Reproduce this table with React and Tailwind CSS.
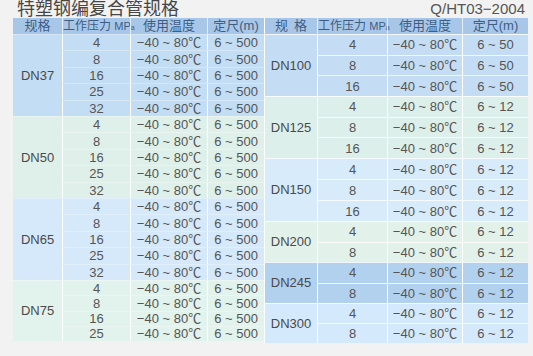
import React from 'react';

const leftCols = ['w-[49px]', 'w-[68px]', 'w-[77px]', 'w-[57px]'];
const rightCols = ['w-[52px]', 'w-[70px]', 'w-[75px]', 'w-[66px]'];

const leftGroups = [
  { name: 'DN37', h: 'h-[82px]', bg: 'bg-[#c3ddf4]', rows: ['4', '8', '16', '25', '32'], len: '6 ~ 500' },
  { name: 'DN50', h: 'h-[82px]', bg: 'bg-[#dff0ea]', rows: ['4', '8', '16', '25', '32'], len: '6 ~ 500' },
  { name: 'DN65', h: 'h-[82px]', bg: 'bg-[#d5e9fa]', rows: ['4', '8', '16', '25', '32'], len: '6 ~ 500' },
  { name: 'DN75', h: 'h-[61px]', bg: 'bg-[#e2f2ec]', rows: ['4', '8', '16', '25'], len: '6 ~ 500' },
];

const rightGroups = [
  { name: 'DN100', h: 'h-[62px]', bg: 'bg-[#c4ddf4]', rows: ['4', '8', '16'], len: '6 ~ 50' },
  { name: 'DN125', h: 'h-[62px]', bg: 'bg-[#ddefea]', rows: ['4', '8', '16'], len: '6 ~ 12' },
  { name: 'DN150', h: 'h-[63px]', bg: 'bg-[#d7ebfb]', rows: ['4', '8', '16'], len: '6 ~ 12' },
  { name: 'DN200', h: 'h-[41px]', bg: 'bg-[#e2f1ea]', rows: ['4', '8'], len: '6 ~ 12' },
  { name: 'DN245', h: 'h-[41px]', bg: 'bg-[#b2d1ef]', rows: ['4', '8'], len: '6 ~ 12' },
  { name: 'DN300', h: 'h-[40px]', bg: 'bg-[#d4e9fb]', rows: ['4', '8'], len: '6 ~ 12' },
];

function Table({ cols, groups, spaced, rowLine }) {
  return (
    <div className="flex flex-col">
      <div className="flex h-[16px] bg-[#a8c7e8] text-[#3e5d85] text-[13px] leading-[16px]">
        <div className={`${cols[0]} text-center ${spaced ? 'tracking-[6px] pl-[6px]' : ''}`}>规格</div>
        <div className={`${cols[1]} text-center border-l border-white/70 text-[12px] whitespace-nowrap`}>
          工作压力 <span className="text-[11px]">MP</span><span className="text-[7px]">a</span>
        </div>
        <div className={`${cols[2]} text-center border-l border-white/70`}>使用温度</div>
        <div className={`${cols[3]} text-center border-l border-white/70`}>定尺(m)</div>
      </div>
      {groups.map((g) => (
        <div key={g.name} className={`flex ${g.h} ${g.bg} ${rowLine}`}>
          <div className={`${cols[0]} flex items-center justify-center text-[13px] text-[#4a4a4a]`}>{g.name}</div>
          <div className="flex flex-col flex-1 min-h-0">
            {g.rows.map((p, i) => (
              <div
                key={p}
                className={`flex flex-1 min-h-0 items-stretch text-[13px] leading-[13px] text-[#555] ${i > 0 ? rowLine : ''}`}
              >
                <div className={`${cols[1]} flex items-center justify-center border-l border-white`}>{p}</div>
                <div className={`${cols[2]} flex items-center justify-center border-l border-white`}>−40 ~ 80℃</div>
                <div className={`${cols[3]} flex items-center justify-center border-l border-white`}>{g.len}</div>
              </div>
            ))}
          </div>
        </div>
      ))}
    </div>
  );
}

export default function App() {
  return (
    <div
      className="w-[533px] h-[356px] bg-[#f2f2f2] pl-[13px] overflow-hidden"
      style={{ fontFamily: '"Liberation Sans", "Noto Sans CJK SC", sans-serif' }}
    >
      <div className="flex items-end justify-between h-[18px] pr-[8px]">
        <span className="pl-[4px] text-[18px] leading-[18px] text-[#474747]">特塑钢编复合管规格</span>
        <span className="text-[15px] leading-[16px] text-[#555] pb-[1px]">Q/HT03−2004</span>
      </div>
      <div className="flex items-start">
        <Table cols={leftCols} groups={leftGroups} spaced={false} rowLine="border-t border-white/30" />
        <div className="border-l border-white">
          <Table cols={rightCols} groups={rightGroups} spaced rowLine="border-t border-white/80" />
        </div>
      </div>
    </div>
  );
}
